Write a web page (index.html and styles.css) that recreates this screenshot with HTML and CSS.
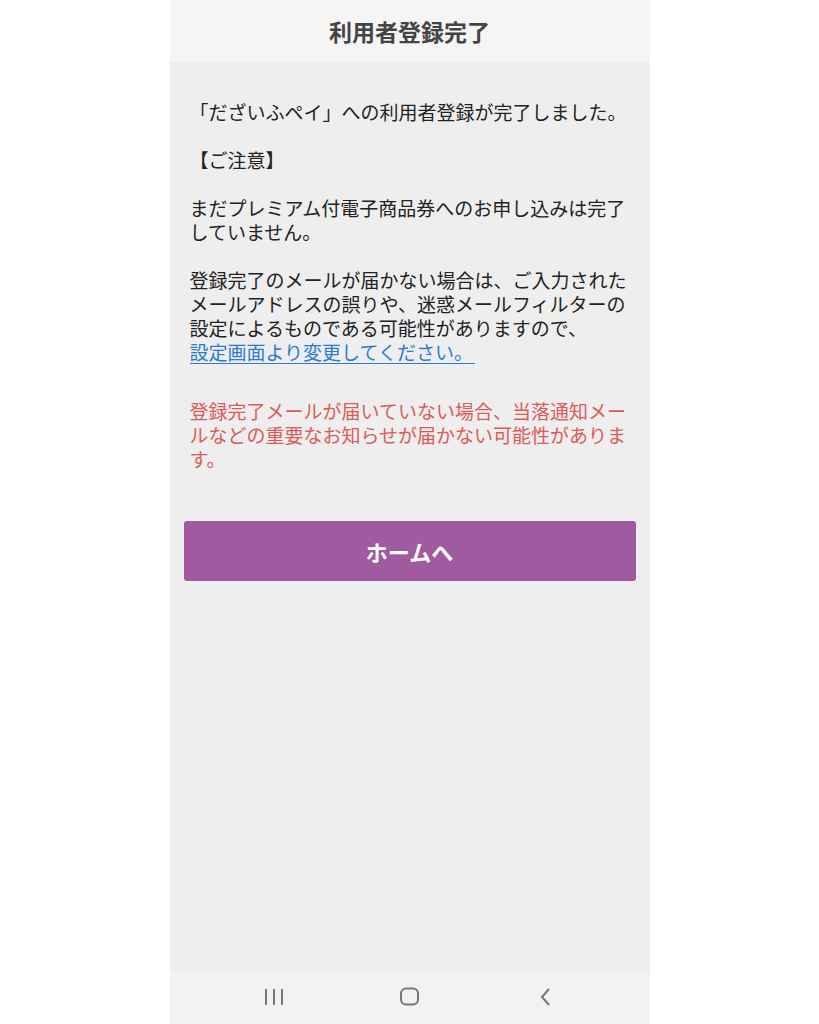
FILE: index.html
```html
<!DOCTYPE html>
<html lang="ja">
<head>
    <meta charset="UTF-8">
    <meta name="viewport" content="width=device-width, initial-scale=1.0">
    <title>利用者登録完了</title>
    <link rel="stylesheet" href="styles.css">
</head>
<body>
    <div class="phone">
        <header class="top-bar">
            <h1>利用者登録完了</h1>
        </header>

        <main class="content">
            <p class="msg">「だざいふペイ」への利用者登録が完了しました。</p>
            <p class="msg">【ご注意】</p>
            <p class="msg">まだプレミアム付電子商品券へのお申し込みは完了していません。</p>
            <div class="msg">
                <p class="msg-text">登録完了のメールが届かない場合は、ご入力されたメールアドレスの誤りや、迷惑メールフィルターの設定によるものである可能性がありますので、</p>
                <a href="#" class="link">設定画面より変更してください。</a>
            </div>
            <p class="msg warn">登録完了メールが届いていない場合、当落通知メールなどの重要なお知らせが届かない可能性があります。</p>

            <button class="btn-home" type="button">ホームへ</button>
        </main>

        <nav class="sys-nav">
            <span class="nav-btn">
                <svg width="24" height="20" viewBox="0 0 24 20">
                    <rect x="3" y="2" width="2" height="16" fill="#777"/>
                    <rect x="11" y="2" width="2" height="16" fill="#777"/>
                    <rect x="19" y="2" width="2" height="16" fill="#777"/>
                </svg>
            </span>
            <span class="nav-btn">
                <svg width="22" height="20" viewBox="0 0 22 20">
                    <rect x="2" y="1.5" width="17" height="16" rx="5" fill="none" stroke="#777" stroke-width="2"/>
                </svg>
            </span>
            <span class="nav-btn">
                <svg width="14" height="20" viewBox="0 0 14 20">
                    <path d="M10 2 L3 10 L10 18" fill="none" stroke="#777" stroke-width="2"/>
                </svg>
            </span>
        </nav>
    </div>
</body>
</html>
```

FILE: styles.css
```css
body {
    margin: 0;
    background-color: #ffffff;
    font-family: "Noto Sans CJK JP", "Noto Sans", sans-serif;
}

.phone {
    width: 480px;
    height: 1024px;
    margin: 0 auto;
    display: flex;
    flex-direction: column;
    background: #eeeeee;
}

.top-bar {
    height: 62px;
    background: #f5f5f5;
    display: flex;
    align-items: center;
    justify-content: center;
}
.top-bar h1 {
    margin: 0;
    font-size: 23px;
    font-weight: bold;
    color: #444;
}

.content {
    flex: 1;
    padding: 38px 14px 0;
}

.msg {
    margin: 0 0 24px;
    padding: 0 6px;
    font-size: 19px;
    line-height: 24px;
    color: #222;
}
.msg-text {
    margin: 0;
}
.link {
    display: block;
    width: fit-content;
    margin-top: 1px;
    color: #2b7bd6;
    text-decoration: none;
    border-bottom: 1px solid #2b7bd6;
    line-height: 22px;
    padding-right: 2px;
}
.warn {
    margin-top: 35px;
    color: #dc5a5a;
}

.btn-home {
    display: block;
    width: 100%;
    height: 60px;
    margin-top: 50px;
    border: none;
    border-radius: 3px;
    background: #a05a9f;
    color: #fff;
    font-family: "Noto Sans CJK JP", sans-serif;
    font-size: 22px;
    font-weight: bold;
}

/* android bar */
.sys-nav {
    height: 54px;
    background: #f2f2f2;
    display: flex;
    justify-content: center;
    align-items: center;
    gap: 106px;
}
.nav-btn {
    width: 30px;
    display: flex;
    justify-content: center;
}
```
